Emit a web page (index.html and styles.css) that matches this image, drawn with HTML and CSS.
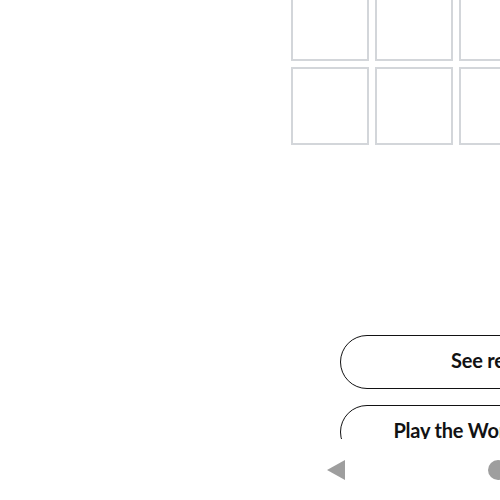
FILE: index.html
```html
<!DOCTYPE html>
<html>
  <head>
    <title>Wordle</title>
    <link rel="stylesheet" href="styles.css">
  </head>
  <body>
    <div class="screen">
      <main class="game">
        <div class="board">
          <div class="row">
            <div class="tile"></div><div class="tile"></div><div class="tile"></div><div class="tile"></div><div class="tile"></div>
          </div>
          <div class="row">
            <div class="tile"></div><div class="tile"></div><div class="tile"></div><div class="tile"></div><div class="tile"></div>
          </div>
          <div class="row">
            <div class="tile"></div><div class="tile"></div><div class="tile"></div><div class="tile"></div><div class="tile"></div>
          </div>
          <div class="row">
            <div class="tile"></div><div class="tile"></div><div class="tile"></div><div class="tile"></div><div class="tile"></div>
          </div>
          <div class="row">
            <div class="tile"></div><div class="tile"></div><div class="tile"></div><div class="tile"></div><div class="tile"></div>
          </div>
          <div class="row">
            <div class="tile"></div><div class="tile"></div><div class="tile"></div><div class="tile"></div><div class="tile"></div>
          </div>
        </div>

        <div class="actions">
          <button class="btn">See results</button>
          <button class="btn">Play the Wordle Archive</button>
        </div>
      </main>

      <!-- system navigation bar -->
      <nav class="navbar">
        <span class="nav-key">
          <svg width="18" height="20" viewBox="0 0 18 20"><polygon points="0,10 18,0 18,20" fill="#9e9e9e"/></svg>
        </span>
        <span class="nav-key">
          <svg width="20" height="20" viewBox="0 0 20 20"><circle cx="10" cy="10" r="10" fill="#9e9e9e"/></svg>
        </span>
        <span class="nav-key">
          <svg width="18" height="18" viewBox="0 0 18 18"><rect width="18" height="18" rx="2" fill="#9e9e9e"/></svg>
        </span>
      </nav>
    </div>
  </body>
</html>
```

FILE: styles.css
```css
body {
  margin: 0;
  overflow: hidden;
  background: white;
  font-family: "Lato", "Liberation Sans", sans-serif;
}
.screen {
  width: 996px;
  height: 500px;
  display: flex;
  flex-direction: column;
}
.game {
  flex: 1;
  overflow: hidden;
  display: flex;
  flex-direction: column;
  align-items: center;
}
.board {
  height: 145px;
  flex-shrink: 0;
  display: flex;
  flex-direction: column;
  justify-content: flex-end;
  gap: 6px;
  overflow: hidden;
}
.row {
  display: flex;
  gap: 6px;
  flex-shrink: 0;
}
.tile {
  width: 78px;
  height: 78px;
  box-sizing: border-box;
  border: 2px solid #d3d6da;
  flex-shrink: 0;
}
.actions {
  margin-top: 190px;
  flex-shrink: 0;
  display: flex;
  flex-direction: column;
  align-items: center;
  gap: 16px;
}
.btn {
  width: 316px;
  height: 54px;
  flex-shrink: 0;
  border: 1px solid #121213;
  border-radius: 27px;
  background: white;
  color: #121213;
  font-family: "Lato", "Liberation Sans", sans-serif;
  font-weight: 700;
  font-size: 20px;
  letter-spacing: -0.2px;
  padding: 0 0 4px;
}
.navbar {
  height: 61px;
  flex-shrink: 0;
  display: flex;
  justify-content: center;
  align-items: center;
  gap: 122px;
}
.nav-key {
  width: 40px;
  display: flex;
  justify-content: center;
}
```
